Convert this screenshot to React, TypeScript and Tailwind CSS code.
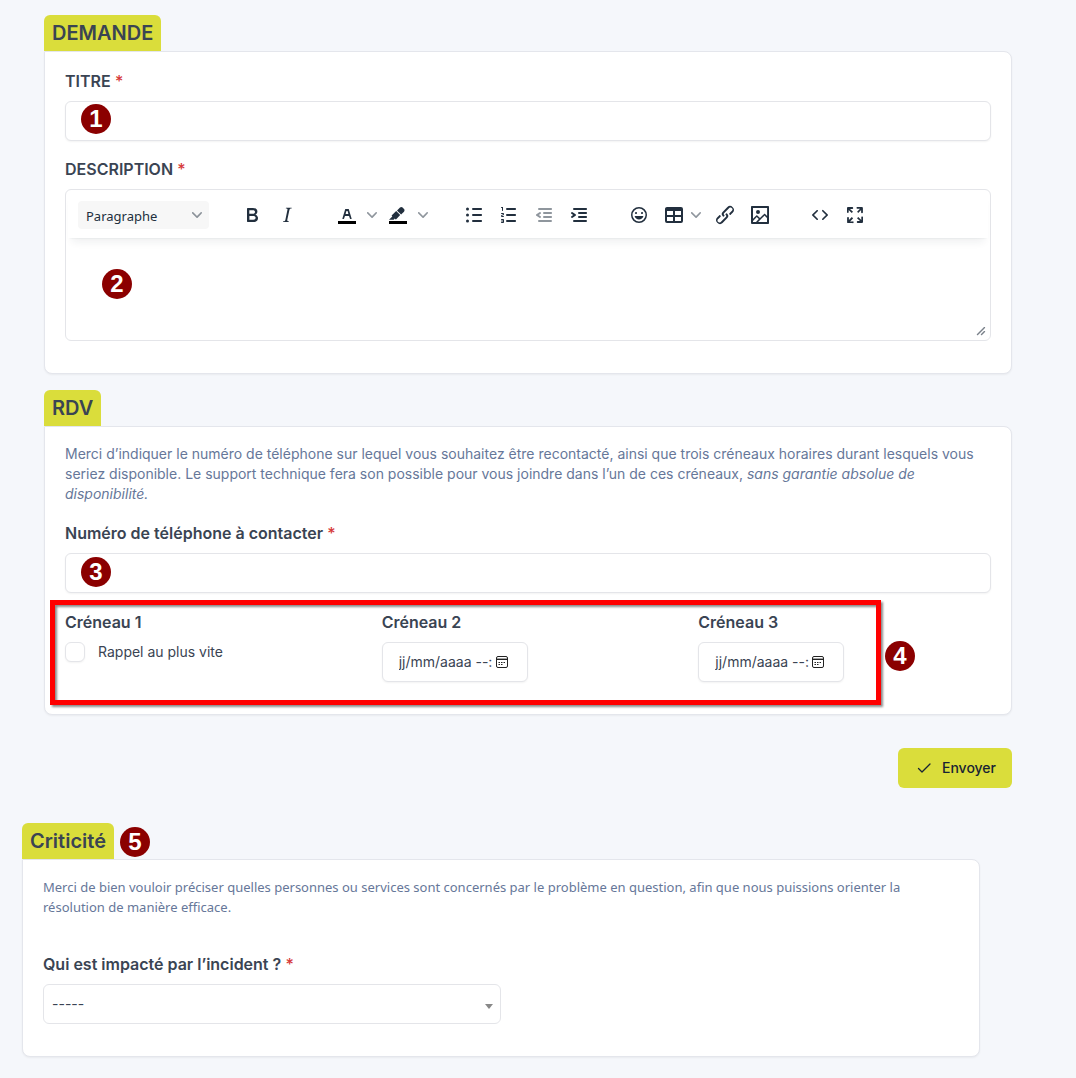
import React from "react";
import clsx from "clsx";

const iconPaths = {
  bold: "M7.8 19c-.3 0-.5 0-.6-.2l-.2-.5V5.7c0-.2 0-.4.2-.5l.6-.2h5c1.5 0 2.7.3 3.5 1 .7.6 1.1 1.4 1.1 2.5a3 3 0 0 1-.6 1.9c-.4.6-1 1-1.6 1.2.4.1.9.3 1.3.6s.8.7 1 1.2c.4.4.5 1 .5 1.6 0 1.3-.4 2.3-1.3 3-.8.7-2.1 1-3.8 1H7.8Zm5-8.3c.6 0 1.2-.1 1.6-.5.4-.3.6-.7.6-1.3 0-1.1-.8-1.7-2.3-1.7H9.3v3.5h3.4Zm.5 6c.7 0 1.3-.1 1.7-.4.4-.4.6-.9.6-1.5s-.2-1-.7-1.4c-.4-.3-1-.4-2-.4H9.4v3.8h4Z",
  italic:
    "m16.7 4.7-.1.9h-.3c-.6 0-1 0-1.4.3-.3.3-.4.6-.5 1.1l-2.1 9.8v.6c0 .5.4.8 1.4.8h.2l-.2.8H8l.2-.8h.2c1.1 0 1.8-.5 2-1.5l2-9.8.1-.5c0-.6-.4-.8-1.4-.8h-.3l.2-.9h5.8Z",
  textColor:
    "M8.7 16h-.8a.5.5 0 0 1-.5-.6l2.7-9c.1-.3.3-.4.5-.4h2.8c.2 0 .4.1.5.4l2.7 9a.5.5 0 0 1-.5.6h-.8a.5.5 0 0 1-.4-.4l-.7-2.2c0-.3-.3-.4-.5-.4h-3.4c-.2 0-.4.1-.5.4l-.7 2.2c0 .3-.2.4-.4.4Zm2.6-7.6-.6 2a.5.5 0 0 0 .5.6h1.6a.5.5 0 0 0 .5-.6l-.6-2c0-.3-.3-.4-.5-.4h-.4c-.2 0-.4.1-.5.4Z",
  highlight:
    "M7.7 16.7H3l3.3-3.3-.7-.8L10.2 8l4 4.1-4 4.2c-.2.2-.6.2-.8 0l-.6-.7-1.1 1.1Zm5-7.5L11 7.4l3-2.9a2 2 0 0 1 2.6 0L18 6c.7.7.7 2 0 2.7l-2.9 2.9-1.8-1.8-.6-.6Z",
  bulletList:
    "M11 5h8c.6 0 1 .4 1 1s-.4 1-1 1h-8a1 1 0 0 1 0-2Zm0 6h8c.6 0 1 .4 1 1s-.4 1-1 1h-8a1 1 0 0 1 0-2Zm0 6h8c.6 0 1 .4 1 1s-.4 1-1 1h-8a1 1 0 0 1 0-2ZM5.5 4.5a1.5 1.5 0 1 1 0 3 1.5 1.5 0 0 1 0-3Zm0 6a1.5 1.5 0 1 1 0 3 1.5 1.5 0 0 1 0-3Zm0 6a1.5 1.5 0 1 1 0 3 1.5 1.5 0 0 1 0-3Z",
  numberList:
    "M10 17h8c.6 0 1 .4 1 1s-.4 1-1 1h-8a1 1 0 0 1 0-2Zm0-6h8c.6 0 1 .4 1 1s-.4 1-1 1h-8a1 1 0 0 1 0-2Zm0-6h8c.6 0 1 .4 1 1s-.4 1-1 1h-8a1 1 0 1 1 0-2ZM6 4v3.5c0 .3-.2.5-.5.5a.5.5 0 0 1-.5-.5V5h-.5a.5.5 0 0 1 0-1H6Zm-1 8.8.2.2h1.3c.3 0 .5.2.5.5s-.2.5-.5.5H4.9a1 1 0 0 1-.9-1V13c0-.4.3-.8.6-1l1.2-.4.2-.3a.2.2 0 0 0-.2-.2H4.5a.5.5 0 0 1-.5-.5c0-.3.2-.5.5-.5h1.6c.5 0 .9.4.9 1v.1c0 .4-.3.8-.6 1l-1.2.4-.2.3ZM7 17v2c0 .6-.4 1-1 1H4.5a.5.5 0 0 1 0-1h1.2c.2 0 .3-.1.3-.3 0-.2-.1-.3-.3-.3H4.4a.4.4 0 1 1 0-.8h1.3c.2 0 .3-.1.3-.3 0-.2-.1-.3-.3-.3H4.5a.5.5 0 1 1 0-1H6c.6 0 1 .4 1 1Z",
  outdent:
    "M7 5h12c.6 0 1 .4 1 1s-.4 1-1 1H7a1 1 0 1 1 0-2Zm5 4h7c.6 0 1 .4 1 1s-.4 1-1 1h-7a1 1 0 0 1 0-2Zm0 4h7c.6 0 1 .4 1 1s-.4 1-1 1h-7a1 1 0 0 1 0-2Zm-5 4h12a1 1 0 0 1 0 2H7a1 1 0 0 1 0-2Zm1.6-3.8a1 1 0 0 1-1.2 1.6l-3-2a1 1 0 0 1 0-1.6l3-2a1 1 0 0 1 1.2 1.6L6.8 12l1.8 1.2Z",
  indent:
    "M7 5h12c.6 0 1 .4 1 1s-.4 1-1 1H7a1 1 0 1 1 0-2Zm5 4h7c.6 0 1 .4 1 1s-.4 1-1 1h-7a1 1 0 0 1 0-2Zm0 4h7c.6 0 1 .4 1 1s-.4 1-1 1h-7a1 1 0 0 1 0-2Zm-5 4h12a1 1 0 0 1 0 2H7a1 1 0 0 1 0-2Zm-2.6-3.8L6.2 12l-1.8-1.2a1 1 0 0 1 1.2-1.6l3 2a1 1 0 0 1 0 1.6l-3 2a1 1 0 1 1-1.2-1.6Z",
  emoji:
    "M9 11c.6 0 1-.4 1-1s-.4-1-1-1a1 1 0 0 0-1 1c0 .6.4 1 1 1Zm6 0c.6 0 1-.4 1-1s-.4-1-1-1a1 1 0 0 0-1 1c0 .6.4 1 1 1Zm-3 5.5c2.1 0 4-1.5 4.4-3.5H7.6c.5 2 2.3 3.5 4.4 3.5ZM12 4a8 8 0 1 0 0 16 8 8 0 0 0 0-16Zm0 14.5a6.5 6.5 0 1 1 0-13 6.5 6.5 0 0 1 0 13Z",
  table:
    "M19 4a2 2 0 0 1 2 2v12a2 2 0 0 1-2 2H5a2 2 0 0 1-2-2V6c0-1.1.9-2 2-2h14ZM5 14v4h6v-4H5Zm14 0h-6v4h6v-4Zm0-6h-6v4h6V8ZM5 12h6V8H5v4Z",
  link: "M6.2 12.3a1 1 0 0 1 1.4 1.4l-2 2a2 2 0 1 0 2.6 2.8l4.8-4.8a1 1 0 0 0 0-1.4 1 1 0 1 1 1.4-1.3 2.9 2.9 0 0 1 0 4L9.6 20a3.9 3.9 0 0 1-5.5-5.5l2-2Zm11.6-.6a1 1 0 0 1-1.4-1.4l2-2a2 2 0 1 0-2.6-2.8L11 10.3a1 1 0 0 0 0 1.4A1 1 0 1 1 9.6 13a2.9 2.9 0 0 1 0-4L14.4 4a3.9 3.9 0 0 1 5.5 5.5l-2 2Z",
  image:
    "m5 15.7 3.3-3.2c.3-.3.7-.3 1 0L12 15l4.1-4c.3-.4.8-.4 1 0l2 1.9V5H5v10.7ZM5 18V19h3l2.8-2.9-2-2L5 17.9Zm14-3-2.5-2.4-6.4 6.5H19v-4ZM4 3h16c.6 0 1 .4 1 1v16c0 .6-.4 1-1 1H4a1 1 0 0 1-1-1V4c0-.6.4-1 1-1Zm6 8a2 2 0 1 0 0-4 2 2 0 0 0 0 4Z",
  code: "M9.8 15.7c.3.3.3.8 0 1-.3.4-.9.4-1.2 0l-4.4-4.1a.8.8 0 0 1 0-1.2l4.4-4.2c.3-.3.9-.3 1.2 0 .3.3.3.8 0 1.1L6 12l3.8 3.7ZM14.2 15.7c-.3.3-.3.8 0 1 .4.4.9.4 1.2 0l4.4-4.1c.3-.3.3-.9 0-1.2l-4.4-4.2a.8.8 0 0 0-1.2 0c-.3.3-.3.8 0 1.1L18 12l-3.8 3.7Z",
  fullscreen:
    "m15.3 10-1.2-1.3 2.9-3h-2.3a.9.9 0 1 1 0-1.7H19c.5 0 .9.4.9.9v4.4a.9.9 0 1 1-1.8 0V7l-2.9 3Zm0 4 3 3v-2.3a.9.9 0 1 1 1.7 0V19c0 .5-.4.9-.9.9h-4.4a.9.9 0 1 1 0-1.8H17l-3-2.9 1.3-1.2ZM10 15.4l-2.9 3h2.3a.9.9 0 1 1 0 1.7H5a.9.9 0 0 1-.9-.9v-4.4a.9.9 0 1 1 1.8 0V17l2.9-3 1.2 1.3ZM8.7 10 5.7 7v2.3a.9.9 0 0 1-1.7 0V5c0-.5.4-.9.9-.9h4.4a.9.9 0 0 1 0 1.8H7l3 2.9-1.3 1.2Z",
};

type IconName = keyof typeof iconPaths;

function Chevron({ className }: { className?: string }) {
  return (
    <svg
      viewBox="0 0 10 10"
      className={clsx("size-[10px] fill-[#222f3e] opacity-50", className)}
    >
      <path d="M8.7 2.2c.3-.3.8-.3 1 0 .4.4.4.9 0 1.2L5.7 7.8c-.3.3-.9.3-1.2 0L.2 3.4a.8.8 0 0 1 0-1.2c.3-.3.8-.3 1.1 0L5 6l3.7-3.8Z" />
    </svg>
  );
}

function Tool({
  icon,
  label,
  menu,
  colorBar,
  disabled,
}: {
  icon: IconName;
  label: string;
  menu?: boolean;
  colorBar?: boolean;
  disabled?: boolean;
}) {
  return (
    <button
      type="button"
      aria-label={label}
      disabled={disabled}
      className="flex h-7 items-center disabled:opacity-50"
    >
      <span className="flex w-[34px] justify-center">
        <svg viewBox="0 0 24 24" fillRule="evenodd" className="size-6 fill-[#222f3e]">
          {colorBar ? <path d="M3 18h18v3H3z" className="fill-black" /> : null}
          <path d={iconPaths[icon]} />
        </svg>
      </span>
      {menu ? (
        <span className={clsx("flex w-4", colorBar ? "justify-center" : "justify-start")}>
          <Chevron />
        </span>
      ) : null}
    </button>
  );
}

function ToolGroup({ children }: { children: React.ReactNode }) {
  return <div className="flex items-center gap-px">{children}</div>;
}

// Numbered marker laid over the form, refers to the steps of the guide
function Marker({ n, className }: { n: number; className: string }) {
  return (
    <span
      className={clsx(
        "pointer-events-none absolute z-10 flex size-[30px] items-center justify-center rounded-full bg-[#8b0000] font-['Liberation_Sans',sans-serif] text-2xl leading-none font-bold text-white",
        className
      )}
    >
      {n}
    </span>
  );
}

function Label({
  htmlFor,
  required,
  children,
}: {
  htmlFor: string;
  required?: boolean;
  children: React.ReactNode;
}) {
  return (
    <label htmlFor={htmlFor} className="mb-2 block text-base font-semibold">
      {children}
      {required ? <span className="font-medium text-[#d63939]"> *</span> : null}
    </label>
  );
}

function Section({
  title,
  marker,
  children,
}: {
  title: string;
  marker?: React.ReactNode;
  children: React.ReactNode;
}) {
  return (
    <section>
      <div className="flex">
        <h2 className="relative rounded-t-md bg-[#dadd3b] px-2 py-1 text-xl font-semibold">
          {title}
          {marker}
        </h2>
      </div>
      <div className="rounded-lg rounded-tl-none border border-[#e4e6ec] bg-white px-5 pt-[17px] pb-8 shadow-xs">
        {children}
      </div>
    </section>
  );
}

const inputStyle =
  "h-10 rounded-md border border-[#e4e5e9] bg-white shadow-xs outline-none";

function DateField({ id, label }: { id: string; label: string }) {
  return (
    <div>
      <Label htmlFor={id}>{label}</Label>
      <div className={clsx(inputStyle, "flex w-[146px] items-center pr-[18px] pl-4")}>
        <input
          id={id}
          type="text"
          placeholder="jj/mm/aaaa --:"
          className="w-0 min-w-0 flex-1 text-sm outline-none placeholder:text-[#3a4453]"
        />
        <button type="button" aria-label="Ouvrir le calendrier">
          <svg viewBox="0 0 14 14" className="size-[14px]" fill="none" stroke="#222">
            <rect x="1.5" y="1.5" width="11" height="11" rx="1.5" />
            <path d="M2 3.500h10" strokeOpacity="0.4" />
            <path d="M1.5 4.500h11M6 7.500h1.500M8.500 7.500H10M3.500 9.500H5M6 9.500h1.500M3.500 7.500H5" />
          </svg>
        </button>
      </div>
    </div>
  );
}

function Editor() {
  return (
    <div className="relative rounded-md border border-[#e4e5e9] bg-white">
      <div className="mx-0.5 flex h-12 items-center gap-[26px] px-[10px] pt-0.5 shadow-[0_2px_2px_-2px_rgba(34,47,62,0.1),0_8px_8px_-4px_rgba(34,47,62,0.07)]">
        <div className="relative">
          <select
            aria-label="Format"
            className="h-7 w-[131px] appearance-none rounded-sm bg-[#f7f7f7] px-2 pt-1 font-['Noto_Sans',sans-serif] text-[13px] text-[#222f3e] outline-none"
          >
            <option>Paragraphe</option>
          </select>
          <Chevron className="pointer-events-none absolute top-[9px] right-[7px]" />
        </div>
        <ToolGroup>
          <Tool icon="bold" label="Gras" />
          <Tool icon="italic" label="Italique" />
        </ToolGroup>
        <ToolGroup>
          <Tool icon="textColor" label="Couleur du texte" menu colorBar />
          <Tool icon="highlight" label="Couleur de fond" menu colorBar />
        </ToolGroup>
        <ToolGroup>
          <Tool icon="bulletList" label="Liste à puces" />
          <Tool icon="numberList" label="Liste numérotée" />
          <Tool icon="outdent" label="Réduire le retrait" disabled />
          <Tool icon="indent" label="Augmenter le retrait" />
        </ToolGroup>
        <ToolGroup>
          <Tool icon="emoji" label="Émoticônes" />
          <Tool icon="table" label="Tableau" menu />
          <Tool icon="link" label="Lien" />
          <Tool icon="image" label="Image" />
        </ToolGroup>
        <ToolGroup>
          <Tool icon="code" label="Code source" />
          <Tool icon="fullscreen" label="Plein écran" />
        </ToolGroup>
      </div>
      <textarea
        id="description"
        className="block h-[102px] w-full resize-none bg-transparent p-4 text-sm outline-none"
      />
      <svg
        viewBox="0 0 10 10"
        className="absolute right-1 bottom-1 size-[10px] fill-[#222f3e] opacity-60"
      >
        <path d="M8.1 1.1A.5.5 0 1 1 9 2l-7 7A.5.5 0 1 1 1 8l7-7ZM8.1 5.1A.5.5 0 1 1 9 6l-3 3A.5.5 0 1 1 5 8l3-3Z" />
      </svg>
      <Marker n={2} className="top-[79px] left-9" />
    </div>
  );
}

export default function App() {
  return (
    <div className="min-h-screen bg-[#f5f7fb] pt-[15px] pb-5 font-[Inter,sans-serif] text-[#3a4453]">
      <form className="flex flex-col gap-4 pr-16 pl-11">
        <Section title="DEMANDE">
          <Label htmlFor="titre" required>
            TITRE
          </Label>
          <div className="relative mb-4">
            <input id="titre" type="text" className={clsx(inputStyle, "block w-full px-3")} />
            <Marker n={1} className="top-[3px] left-4" />
          </div>
          <Label htmlFor="description" required>
            DESCRIPTION
          </Label>
          <Editor />
        </Section>

        <Section title="RDV">
          <p className="mb-[17px] text-sm text-[#667799]">
            Merci d’indiquer le numéro de téléphone sur lequel vous souhaitez
            être recontacté, ainsi que trois créneaux horaires durant lesquels
            vous seriez disponible. Le support technique fera son possible pour
            vous joindre dans l’un de ces créneaux,{" "}
            <em>sans garantie absolue de disponibilité.</em>
          </p>
          <Label htmlFor="telephone" required>
            Numéro de téléphone à contacter
          </Label>
          <div className="relative mb-[17px]">
            <input id="telephone" type="tel" className={clsx(inputStyle, "block w-full px-3")} />
            <Marker n={3} className="top-1 left-4" />
          </div>
          <div className="relative grid grid-cols-3 gap-6">
            <div>
              <Label htmlFor="creneau1">Créneau 1</Label>
              <div className="flex items-center gap-[13px]">
                <input
                  id="creneau1"
                  type="checkbox"
                  className="size-5 appearance-none rounded-md border border-[#e4e5e9] bg-white shadow-xs"
                />
                <label htmlFor="creneau1" className="text-sm">
                  Rappel au plus vite
                </label>
              </div>
            </div>
            <DateField id="creneau2" label="Créneau 2" />
            <DateField id="creneau3" label="Créneau 3" />
            <div className="pointer-events-none absolute -top-[10px] right-[110px] -bottom-[23px] -left-[15px] border-5 border-[#ff0000] drop-shadow-[2px_2px_1px_rgba(0,0,0,0.45)]" />
            <Marker n={4} className="top-[31px] right-[76px]" />
          </div>
        </Section>

        <div className="mt-[17px] flex justify-end">
          <button
            type="submit"
            className="flex h-10 items-center gap-2 rounded-md bg-[#dadd3b] px-4 text-sm font-medium text-[#182433]"
          >
            <svg viewBox="0 0 20 20" className="size-5" fill="none" stroke="currentColor" strokeWidth="1.3">
              <path d="m4.500 10.500 3.500 3.500 8-8" strokeLinecap="round" strokeLinejoin="round" />
            </svg>
            Envoyer
          </button>
        </div>
      </form>

      <div className="mt-[35px] pr-24 pl-[22px]">
        <Section
          title="Criticité"
          marker={<Marker n={5} className="top-1 left-full ml-[6px]" />}
        >
          <p className="mb-[35px] font-['Noto_Sans',sans-serif] text-[13px] leading-5 text-[#667799]">
            Merci de bien vouloir préciser quelles personnes ou services sont
            concernés par le problème en question, afin que nous puissions
            orienter la résolution de manière efficace.
          </p>
          <Label htmlFor="impact" required>
            Qui est impacté par l’incident ?
          </Label>
          <div className="relative w-1/2">
            <select
              id="impact"
              className="h-10 w-full appearance-none rounded-md border border-[#e4e5e9] bg-white px-2 text-sm outline-none"
            >
              <option>-----</option>
            </select>
            <svg
              viewBox="0 0 8 5"
              className="pointer-events-none absolute top-5 right-2 h-[5px] w-2 fill-[#888888]"
            >
              <path d="M0 0h8L4 5Z" />
            </svg>
          </div>
        </Section>
      </div>
    </div>
  );
}
